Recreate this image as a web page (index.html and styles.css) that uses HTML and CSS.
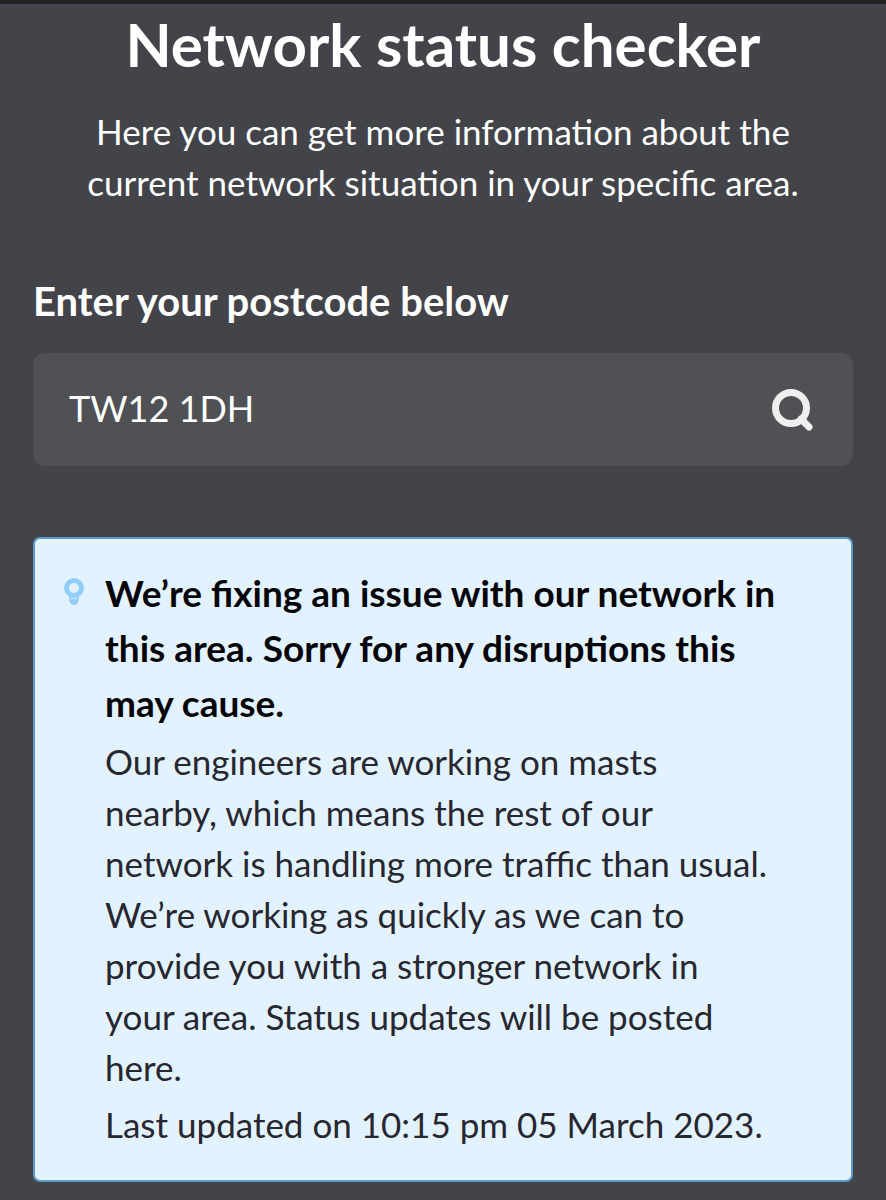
FILE: index.html
```html
<!DOCTYPE html>
<html lang="en">
<head>
<meta charset="utf-8">
<meta name="viewport" content="width=device-width, initial-scale=1">
<title>Network status checker</title>
<link rel="stylesheet" href="styles.css">
</head>
<body>
<main class="page">
  <header class="intro">
    <h1 class="title">Network status checker</h1>
    <p class="lead">Here you can get more information about the<br>current network situation in your specific area.</p>
  </header>
  <form class="search">
    <label class="search-label" for="postcode">Enter your postcode below</label>
    <div class="search-box">
      <input class="search-input" id="postcode" type="text" value="TW12 1DH">
      <button class="search-button" type="button" aria-label="Search">
        <svg class="search-icon" viewBox="0 0 44 44" aria-hidden="true">
          <circle cx="20" cy="20" r="15.500"/>
          <path d="M30 31L38 39"/>
        </svg>
      </button>
    </div>
  </form>
  <section class="notice">
    <svg class="bulb" viewBox="0 0 22 30" aria-hidden="true">
      <path class="bulb-base" d="M3 15L6 18V23Q7 28 11 28T16 23V18L19 15Z"/>
      <circle class="bulb-glass" cx="11" cy="11" r="7.500"/>
      <path class="bulb-line" d="M7 21.500h8"/>
    </svg>
    <div class="notice-body">
      <h2 class="notice-title">We’re fixing an issue with our network in<br>this area. Sorry for any disruptions this<br>may cause.</h2>
      <p class="notice-text">Our engineers are working on masts<br>nearby, which means the rest of our<br>network is handling more traffic than usual.<br>We’re working as quickly as we can to<br>provide you with a stronger network in<br>your area. Status updates will be posted<br>here.</p>
      <p class="notice-text">Last updated on 10:15 pm 05 March 2023.</p>
    </div>
  </section>
</main>
</body>
</html>
```
FILE: styles.css
```css
* { box-sizing: border-box; }
body {
  margin: 0;
  background: #434449;
  color: #fff;
  font-family: Lato, "Liberation Sans", sans-serif;
}
.page { border-top: 4px solid #222223; padding: 2px 33px 19px; }
.intro { text-align: center; }
.title { margin: 0; font-size: 60px; line-height: 76px; font-weight: 700; }
.lead { margin: 24px 0 0; font-size: 35px; line-height: 51px; }
.search { margin-top: 65px; }
.search-label { display: block; font-size: 40px; line-height: 56px; font-weight: 700; }
.search-box {
  display: flex;
  align-items: center;
  margin-top: 24px;
  height: 113px;
  padding: 0 38px 0 36px;
  border-radius: 12px;
  background: #505154;
}
.search-input {
  flex: 1;
  min-width: 0;
  padding: 0 0 4px;
  border: 0;
  outline: 0;
  background: none;
  color: #fff;
  font: 400 36px/56px Lato, "Liberation Sans", sans-serif;
}
.search-button { display: flex; padding: 0; border: 0; background: none; }
.search-icon {
  width: 44px;
  height: 44px;
  fill: none;
  stroke: #efeff0;
  stroke-width: 7;
  stroke-linecap: round;
}
.notice {
  display: flex;
  align-items: flex-start;
  gap: 20px;
  margin-top: 71px;
  padding: 26px 28px 24px;
  border: 2px solid #5b9dca;
  border-radius: 7px;
  background: #e3f2ff;
  color: #27272f;
}
.bulb { flex: none; width: 22px; height: 30px; margin-top: 12px; }
.bulb-glass { fill: #e3f2ff; stroke: #91cdfb; stroke-width: 5; }
.bulb-base { fill: #91cdfb; }
.bulb-line { fill: none; stroke: #b5ddfc; stroke-width: 2; }
.notice-body { flex: 1; min-width: 0; }
.notice-title { margin: 0 0 6px; color: #050508; font-size: 37px; line-height: 55px; font-weight: 700; }
.notice-text { margin: 0 0 6px; font-size: 35px; line-height: 51px; }
```
